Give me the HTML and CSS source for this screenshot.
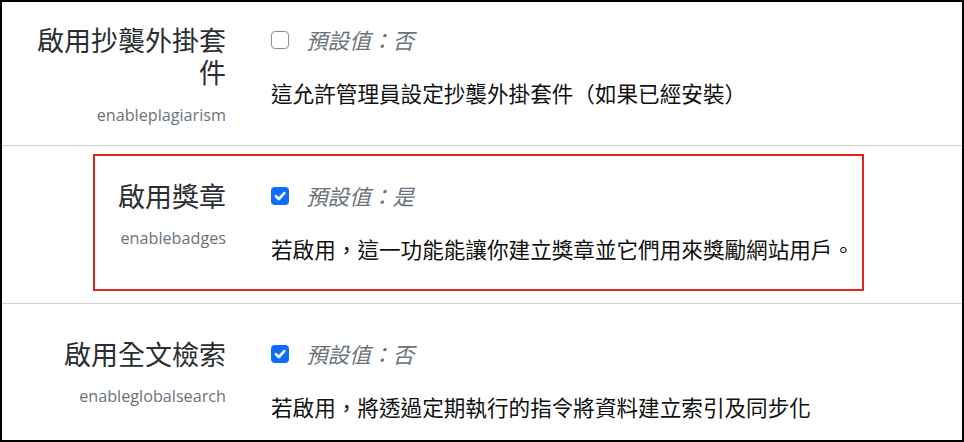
FILE: index.html
```html
<!DOCTYPE html>
<html lang="zh-Hant">
<head>
<meta charset="utf-8">
<title>設定</title>
<link rel="stylesheet" href="styles.css">
</head>
<body>
<div class="frame">
  <div class="setting first">
    <div class="label-col">
      <div class="title">啟用抄襲外掛套件</div>
      <div class="shortname">enableplagiarism</div>
    </div>
    <div class="content-col">
      <div class="default-line">
        <span class="box"></span>
        <span class="default">預設值：否</span>
      </div>
      <div class="desc">這允許管理員設定抄襲外掛套件（如果已經安裝）</div>
    </div>
  </div>

  <div class="setting">
    <div class="label-col">
      <div class="title">啟用獎章</div>
      <div class="shortname">enablebadges</div>
    </div>
    <div class="content-col">
      <div class="default-line">
        <span class="box checked"><svg viewBox="0 0 20 20" width="18" height="18"><path d="M5.5 10.2l3.2 3.2l6-6.6" fill="none" stroke="#fff" stroke-width="3" stroke-linecap="round" stroke-linejoin="round"/></svg></span>
        <span class="default">預設值：是</span>
      </div>
      <div class="desc">若啟用，這一功能能讓你建立獎章並它們用來獎勵網站用戶。</div>
    </div>
    <div class="highlight"></div>
  </div>

  <div class="setting last">
    <div class="label-col">
      <div class="title">啟用全文檢索</div>
      <div class="shortname">enableglobalsearch</div>
    </div>
    <div class="content-col">
      <div class="default-line">
        <span class="box checked"><svg viewBox="0 0 20 20" width="18" height="18"><path d="M5.5 10.2l3.2 3.2l6-6.6" fill="none" stroke="#fff" stroke-width="3" stroke-linecap="round" stroke-linejoin="round"/></svg></span>
        <span class="default">預設值：否</span>
      </div>
      <div class="desc">若啟用，將透過定期執行的指令將資料建立索引及同步化</div>
    </div>
  </div>
</div>
</body>
</html>
```

FILE: styles.css
```css
html, body {
  margin: 0;
  padding: 0;
  background: #fff;
}

.frame {
  width: 964px;
  height: 442px;
  box-sizing: border-box;
  border: 2px solid #000;
  overflow: hidden;
  background: #fff;
  font-family: "Noto Sans CJK TC", "Noto Sans", sans-serif;
}

.setting {
  position: relative;
  display: grid;
  grid-template-columns: 224px 1fr;
  column-gap: 45px;
  padding: 34px 0 15px;
  border-bottom: 1px solid #cfcfcf;
}

.setting.first {
  padding-top: 22px;
  padding-bottom: 13px;
}

.setting.last {
  border-bottom: none;
}

.label-col {
  text-align: right;
  padding-left: 26px;
}

.title {
  font-size: 27px;
  line-height: 32.4px;
  color: #2a2d31;
}

.shortname {
  margin-top: 14px;
  font-family: "Open Sans", "Noto Sans", sans-serif;
  font-size: 16.2px;
  line-height: 24px;
  color: #6a737b;
}

.content-col {
  padding-bottom: 22px;
}

.default-line {
  display: flex;
  align-items: center;
  gap: 17px;
  height: 32.4px;
}

.box {
  width: 18px;
  height: 18px;
  box-sizing: border-box;
  border: 1.6px solid #8a8d91;
  border-radius: 4px;
  background: #fff;
  display: flex;
  align-items: center;
  justify-content: center;
  flex: none;
}

.box.checked {
  border: none;
  background: #0d6efd;
}

.box svg {
  display: block;
}

.default {
  font-size: 21.6px;
  line-height: 32.4px;
  font-style: italic;
  color: #6a737b;
}

.desc {
  margin-top: 21px;
  font-size: 21.6px;
  line-height: 32.4px;
  color: #111;
}

.highlight {
  position: absolute;
  top: 8px;
  left: 91px;
  width: 771px;
  height: 137px;
  box-sizing: border-box;
  border: 2px solid #e02424;
  pointer-events: none;
}
```
